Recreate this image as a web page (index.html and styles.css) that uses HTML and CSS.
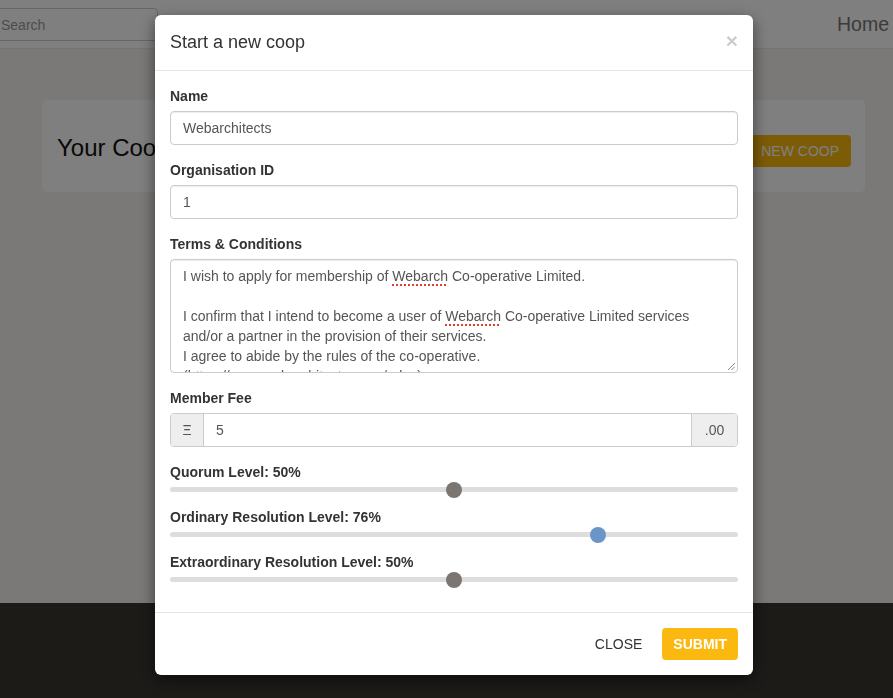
FILE: index.html
```html
<!DOCTYPE html>
<html>
<head>
<meta charset="utf-8">
<link rel="stylesheet" href="styles.css">
</head>
<body>
<div class="page">
  <nav class="navbar">
    <input class="search" type="text" placeholder="Search">
    <a class="nav-home">Home</a>
  </nav>
  <main class="main">
    <div class="card">
      <h2 class="card-title">Your Coops</h2>
      <button class="btn btn-warning">NEW COOP</button>
    </div>
  </main>
  <footer class="footer"></footer>
</div>

<div class="backdrop"></div>
<div class="modal">
  <div class="modal-header">
    <h4 class="modal-title">Start a new coop</h4>
    <span class="close">×</span>
  </div>
  <div class="modal-body">
    <div class="form-group">
      <label class="label">Name</label>
      <div class="form-control">Webarchitects</div>
    </div>
    <div class="form-group">
      <label class="label">Organisation ID</label>
      <div class="form-control">1</div>
    </div>
    <div class="form-group">
      <label class="label">Terms &amp; Conditions</label>
      <div class="textarea"><div class="ta-text">I wish to apply for membership of <span class="sp">Webarch</span> Co-operative Limited.

I confirm that I intend to become a user of <span class="sp">Webarch</span> Co-operative Limited services
and/or a partner in the provision of their services.
I agree to abide by the rules of the co-operative.
(https://www.webarchitects.coop/rules)</div>
        <svg class="grip" width="8" height="8" viewBox="0 0 8 8"><path d="M1 8 L8 1 M4.5 8 L8 4.5" stroke="#888" stroke-width="1"/></svg>
      </div>
    </div>
    <div class="form-group">
      <label class="label">Member Fee</label>
      <div class="input-group">
        <span class="addon addon-left">Ξ</span>
        <span class="ig-input">5</span>
        <span class="addon addon-right">.00</span>
      </div>
    </div>
    <div class="form-group">
      <label class="label">Quorum Level: 50%</label>
      <div class="slider"><span class="thumb" style="left: calc(8px + (100% - 16px) * 0.50)"></span></div>
    </div>
    <div class="form-group">
      <label class="label">Ordinary Resolution Level: 76%</label>
      <div class="slider"><span class="thumb thumb-active" style="left: calc(8px + (100% - 16px) * 0.76)"></span></div>
    </div>
    <div class="form-group">
      <label class="label">Extraordinary Resolution Level: 50%</label>
      <div class="slider"><span class="thumb" style="left: calc(8px + (100% - 16px) * 0.50)"></span></div>
    </div>
  </div>
  <div class="modal-footer">
    <button class="btn btn-link">CLOSE</button>
    <button class="btn btn-submit">SUBMIT</button>
  </div>
</div>
</body>
</html>
```

FILE: styles.css
```css
* { box-sizing: border-box; }
html, body {
  margin: 0;
  padding: 0;
  height: 100%;
  overflow: hidden;
}
body {
  font-family: "Liberation Sans", Arial, sans-serif;
  font-size: 14px;
  line-height: 20px;
  color: #333;
  background: #f5f2ee;
}
.page {
  display: flex;
  flex-direction: column;
  min-height: 100%;
}
.navbar {
  height: 49px;
  background: #fff;
  border-bottom: 1px solid #e9e9e9;
  display: flex;
  align-items: flex-start;
  justify-content: space-between;
  padding-right: 4px;
}
.search {
  margin-top: 8px;
  margin-left: -12px;
  width: 170px;
  height: 33px;
  border: 1px solid #ccc;
  border-radius: 4px;
  padding: 6px 12px;
  font-family: "Liberation Sans", Arial, sans-serif;
  font-size: 14px;
  color: #555;
  background: #fff;
}
.search::placeholder { color: #999; }
.nav-home {
  margin-top: 12px;
  font-size: 19.5px;
  line-height: 24px;
  color: #777;
}
.main {
  height: 554px;
  padding: 51px 28px 0 42px;
}
.card {
  height: 92px;
  background: #fff;
  border-radius: 5px;
  display: flex;
  align-items: center;
  justify-content: space-between;
  padding: 0 14px 0 15px;
}
.card-title {
  margin: 4px 0 0;
  font-size: 24px;
  font-weight: normal;
  color: #111;
  line-height: 30px;
}
.btn {
  font-family: "Liberation Sans", Arial, sans-serif;
  font-size: 14px;
  border: none;
  border-radius: 4px;
  cursor: pointer;
}
.btn-warning {
  height: 32px;
  margin-top: 10px;
  padding: 0 12px;
  background: #f9b80f;
  color: #fff;
  font-weight: normal;
}
.footer {
  flex: 1;
  background: #3a3631;
}

.backdrop {
  position: fixed;
  inset: 0;
  background: rgba(0, 0, 0, 0.5);
}
.modal {
  position: fixed;
  top: 15px;
  left: 155px;
  width: 598px;
  background: #fff;
  border-radius: 6px;
  box-shadow: 0 5px 15px rgba(0, 0, 0, 0.5);
}
.modal-header {
  display: flex;
  align-items: center;
  justify-content: space-between;
  padding: 15px;
  border-bottom: 1px solid #e5e5e5;
}
.modal-title {
  margin: 0;
  font-size: 18px;
  font-weight: normal;
  line-height: 25px;
  color: #333;
}
.close {
  font-size: 21px;
  font-weight: bold;
  color: #000;
  opacity: 0.2;
  line-height: 20px;
  margin-right: 0;
  margin-top: -4px;
}
.modal-body {
  padding: 15px;
}
.form-group { margin-bottom: 15px; }
.label {
  display: block;
  font-weight: bold;
  margin-bottom: 5px;
  color: #333;
}
.form-control {
  height: 34px;
  border: 1px solid #ccc;
  border-radius: 4px;
  padding: 6px 12px;
  color: #555;
  box-shadow: inset 0 1px 1px rgba(0, 0, 0, 0.075);
}
.textarea {
  position: relative;
  height: 114px;
  border: 1px solid #ccc;
  border-radius: 4px;
  padding: 6px 12px;
  color: #555;
  overflow: hidden;
  box-shadow: inset 0 1px 1px rgba(0, 0, 0, 0.075);
}
.ta-text { white-space: pre; }
.sp {
  text-decoration: underline dotted #e0402a;
  text-decoration-thickness: 2px;
  text-underline-offset: 3px;
}
.grip {
  position: absolute;
  right: 2px;
  bottom: 2px;
}
.input-group {
  display: flex;
  height: 34px;
  border: 1px solid #ccc;
  border-radius: 4px;
  overflow: hidden;
  color: #555;
}
.addon {
  background: #eee;
  display: flex;
  align-items: center;
  justify-content: center;
}
.addon-left {
  width: 33px;
  border-right: 1px solid #ccc;
}
.addon-right {
  width: 46px;
  border-left: 1px solid #ccc;
}
.ig-input {
  flex: 1;
  padding: 6px 12px;
}
.slider {
  position: relative;
  height: 5px;
  background: #ddd;
  border-radius: 3px;
}
.thumb {
  position: absolute;
  top: 50%;
  width: 16px;
  height: 16px;
  margin-left: -8px;
  margin-top: -8px;
  border-radius: 50%;
  background: #7b7672;
}
.thumb-active { background: #6a95c9; }
.modal-footer {
  display: flex;
  justify-content: flex-end;
  align-items: center;
  gap: 8px;
  padding: 15px;
  border-top: 1px solid #e5e5e5;
}
.btn-link {
  background: transparent;
  color: #333;
  height: 32px;
  padding: 0 12px;
}
.btn-submit {
  background: #fbb811;
  color: #fff;
  font-weight: bold;
  height: 32px;
  padding: 0 11px;
}
```
